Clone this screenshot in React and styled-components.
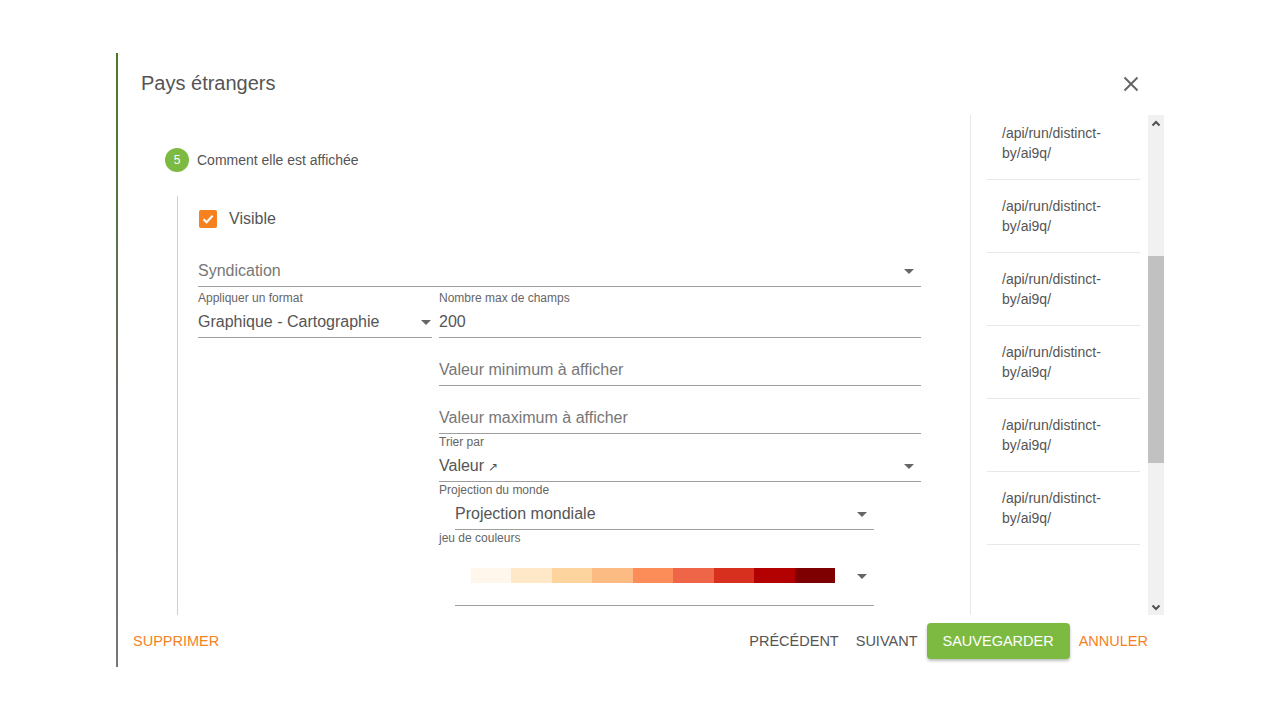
import React from 'react';
import styled, { createGlobalStyle } from 'styled-components';

const GlobalStyle = createGlobalStyle`
  body {
    margin: 0;
    background: #ffffff;
    font-family: "Liberation Sans", Arial, sans-serif;
  }
`;

const Page = styled.div`
  width: 1280px;
  height: 720px;
  padding: 53px 0 0 116px;
  box-sizing: border-box;
`;

const Dialog = styled.div`
  width: 1049px;
  height: 614px;
  display: flex;
  flex-direction: column;
  border-left: 2px solid #666;
  border-image: linear-gradient(#4c7a26, #6a6a6a 60%, #777) 1;
  box-sizing: border-box;
  background: #fff;
`;

const Header = styled.div`
  height: 62px;
  display: flex;
  align-items: flex-start;
  justify-content: space-between;
  padding: 18px 26px 0 23px;
  box-sizing: border-box;
`;

const Title = styled.h2`
  margin: 0;
  font-size: 20px;
  line-height: 24px;
  font-weight: 400;
  color: #555;
`;

const CloseButton = styled.button`
  border: 0;
  background: none;
  padding: 0;
  margin-top: 5px;
  width: 16px;
  height: 16px;
  cursor: pointer;
`;

const Body = styled.div`
  height: 500px;
  display: flex;
`;

const Main = styled.div`
  flex: 1;
  overflow: hidden;
  padding: 33px 0 0 47px;
  box-sizing: border-box;
`;

const StepHead = styled.div`
  display: flex;
  align-items: center;
  gap: 8px;
  height: 24px;
`;

const StepBadge = styled.span`
  width: 24px;
  height: 24px;
  border-radius: 50%;
  background: #7cba41;
  color: #fff;
  font-size: 12px;
  display: flex;
  align-items: center;
  justify-content: center;
`;

const StepLabel = styled.span`
  font-size: 14px;
  color: #555;
`;

const StepBody = styled.div`
  margin: 24px 0 0 12px;
  border-left: 1px solid #cfcfcf;
  padding: 14px 0 0 20px;
  height: 600px;
  width: 723px;
`;

const CheckRow = styled.label`
  display: flex;
  align-items: center;
  gap: 12px;
  height: 18px;
  padding-left: 1px;
  font-size: 16px;
  color: #555;
`;

const CheckBox = styled.span`
  width: 18px;
  height: 18px;
  border-radius: 2px;
  background: #f5821f;
  display: flex;
  align-items: center;
  justify-content: center;
`;

const Field = styled.div`
  width: ${({ width }) => width || 'auto'};
  margin-left: ${({ indent }) => indent || 0}px;
  margin-top: ${({ top }) => top || 0}px;
  flex: ${({ grow }) => (grow ? 1 : 'none')};
`;

const Label = styled.div`
  height: 16px;
  line-height: 16px;
  font-size: 12px;
  color: #666;
  white-space: nowrap;
`;

const Control = styled.div`
  height: ${({ tall }) => (tall ? 59 : 31)}px;
  border-bottom: 1px solid #9e9e9e;
  display: flex;
  align-items: center;
  padding-right: ${({ arrow }) => arrow || 0}px;
  font-size: 16px;
  color: ${({ placeholder }) => (placeholder ? '#777' : '#555')};
`;

const Value = styled.span`
  flex: 1;
  white-space: nowrap;
`;

const Caret = styled.span`
  flex-shrink: 0;
  width: 0;
  height: 0;
  border-left: 5px solid transparent;
  border-right: 5px solid transparent;
  border-top: 5px solid #666;
  margin-top: 1px;
`;

const Row = styled.div`
  display: flex;
  gap: 7px;
  margin-top: ${({ top }) => top || 0}px;
`;

const SmallArrow = styled.span`
  font-size: 12px;
  margin-left: 4px;
  color: #555;
`;

const Palette = styled.div`
  display: flex;
  flex-shrink: 0;
  width: 364px;
  height: 15px;
  margin: 0 22px 0 16px;
`;

const Swatch = styled.span`
  width: 40.44px;
  background: ${({ color }) => color};
`;

const Side = styled.div`
  width: 195px;
  display: flex;
  border-left: 1px solid #e6e6e6;
  box-sizing: border-box;
`;

const List = styled.ul`
  flex: 1;
  list-style: none;
  margin: 0;
  padding: 0 8px 0 16px;
  overflow: hidden;
`;

const Item = styled.li`
  padding: ${({ first }) => (first ? 8 : 16)}px 0 16px 15px;
  border-bottom: 1px solid #e8e8e8;
  font-size: 14px;
  line-height: 20px;
  color: #555;
`;

const ScrollBar = styled.div`
  width: 16px;
  background: #f1f1f1;
  display: flex;
  flex-direction: column;
  margin-right: 1px;
`;

const ScrollArrow = styled.div`
  height: 16px;
  display: flex;
  align-items: center;
  justify-content: center;
`;

const ScrollGap = styled.div`
  height: ${({ h }) => h}px;
  flex: ${({ h }) => (h ? 'none' : 1)};
`;

const Thumb = styled.div`
  height: 207px;
  background: #c1c1c1;
`;

const Footer = styled.div`
  height: 52px;
  display: flex;
  align-items: center;
  padding: 0 9px 0 6px;
`;

const TextButton = styled.button`
  border: 0;
  background: none;
  height: 36px;
  padding: 0 8px;
  margin-left: 1px;
  font-family: inherit;
  font-size: 14.5px;
  text-transform: uppercase;
  color: ${({ tone }) => (tone === 'orange' ? '#f5821f' : '#555')};
  cursor: pointer;
`;

const SaveButton = styled.button`
  border: 0;
  border-radius: 4px;
  background: #7cba41;
  color: #fff;
  height: 36px;
  padding: 0 16px;
  margin-left: 1px;
  font-family: inherit;
  font-size: 14.5px;
  text-transform: uppercase;
  box-shadow: 0 2px 3px rgba(0, 0, 0, 0.25);
  cursor: pointer;
`;

const Spacer = styled.div`
  flex: 1;
`;

const colors = ['#fff7ec', '#fee8c8', '#fdd49e', '#fdbb84', '#fc8d59', '#ef6548', '#d7301f', '#b30000', '#7f0000'];

const Select = ({ label, value, placeholder, indent, width, top, arrow = 7 }) => (
  <Field indent={indent} width={width} top={top}>
    <Label>{label}</Label>
    <Control placeholder={placeholder} arrow={arrow}>
      <Value>{value}</Value>
      {arrow ? <Caret /> : null}
    </Control>
  </Field>
);

const App = () => (
  <Page>
    <GlobalStyle />
    <Dialog>
      <Header>
        <Title>Pays étrangers</Title>
        <CloseButton aria-label="Fermer">
          <svg width="16" height="16" viewBox="0 0 16 16">
            <path d="M1.5 1.5L14.5 14.5M14.5 1.5L1.5 14.5" stroke="#666" strokeWidth="2" />
          </svg>
        </CloseButton>
      </Header>
      <Body>
        <Main>
          <StepHead>
            <StepBadge>5</StepBadge>
            <StepLabel>Comment elle est affichée</StepLabel>
          </StepHead>
          <StepBody>
            <CheckRow>
              <CheckBox>
                <svg width="14" height="14" viewBox="0 0 14 14">
                  <path d="M2.5 7.2L5.6 10.2L11.6 3.8" stroke="#fff" strokeWidth="2" fill="none" />
                </svg>
              </CheckBox>
              Visible
            </CheckRow>
            <Field top={27}>
              <Control placeholder arrow={7}>
                <Value>Syndication</Value>
                <Caret />
              </Control>
            </Field>
            <Row top={3}>
              <Select label="Appliquer un format" value="Graphique - Cartographie" width="234px" arrow={1} />
              <Field grow>
                <Label>Nombre max de champs</Label>
                <Control>
                  <Value>200</Value>
                </Control>
              </Field>
            </Row>
            <Select indent={241} value="Valeur minimum à afficher" placeholder arrow={0} />
            <Select indent={241} value="Valeur maximum à afficher" placeholder arrow={0} />
            <Select
              indent={241}
              label="Trier par"
              value={<>Valeur<SmallArrow>↗</SmallArrow></>}
            />
            <Field indent={241}>
              <Label>Projection du monde</Label>
              <Field indent={16} width="419px">
                <Control arrow={7}>
                  <Value>Projection mondiale</Value>
                  <Caret />
                </Control>
              </Field>
            </Field>
            <Field indent={241}>
              <Label>jeu de couleurs</Label>
              <Field indent={16} width="419px">
                <Control tall arrow={7}>
                  <Palette>
                    {colors.map((c) => (
                      <Swatch key={c} color={c} />
                    ))}
                  </Palette>
                  <Caret />
                </Control>
              </Field>
            </Field>
          </StepBody>
        </Main>
        <Side>
          <List>
            {[0, 1, 2, 3, 4, 5].map((i) => (
              <Item key={i} first={i === 0}>
                /api/run/distinct-
                <br />
                by/ai9q/
              </Item>
            ))}
          </List>
          <ScrollBar>
            <ScrollArrow>
              <svg width="10" height="7" viewBox="0 0 10 7">
                <path d="M1.5 5.5L5 2L8.5 5.5" stroke="#505050" strokeWidth="2" fill="none" />
              </svg>
            </ScrollArrow>
            <ScrollGap h={125} />
            <Thumb />
            <ScrollGap />
            <ScrollArrow>
              <svg width="10" height="7" viewBox="0 0 10 7">
                <path d="M1.5 1.5L5 5L8.5 1.5" stroke="#505050" strokeWidth="2" fill="none" />
              </svg>
            </ScrollArrow>
          </ScrollBar>
        </Side>
      </Body>
      <Footer>
        <TextButton tone="orange">Supprimer</TextButton>
        <Spacer />
        <TextButton>Précédent</TextButton>
        <TextButton>Suivant</TextButton>
        <SaveButton>Sauvegarder</SaveButton>
        <TextButton tone="orange">Annuler</TextButton>
      </Footer>
    </Dialog>
  </Page>
);

export default App;
